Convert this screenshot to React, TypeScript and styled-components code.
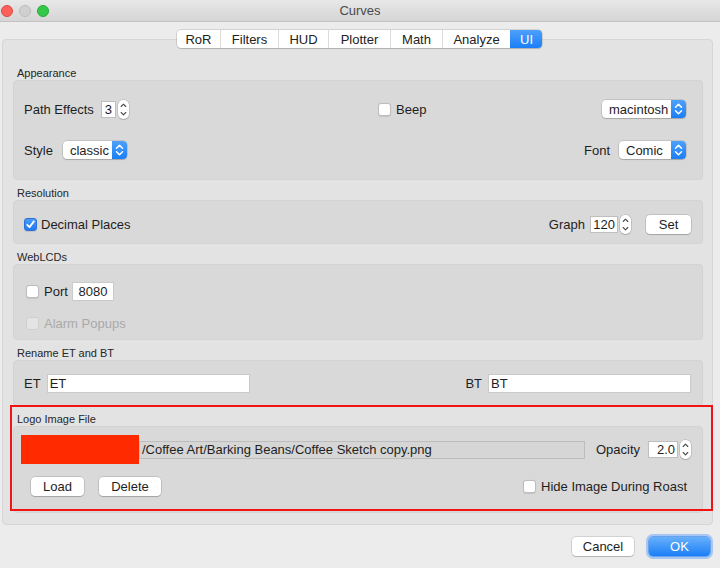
import * as React from "react";
import styled, { createGlobalStyle, css } from "styled-components";

const GlobalStyle = createGlobalStyle`
  html, body {
    margin: 0;
    padding: 0;
    background: #ececec;
  }
  body {
    font-family: "Liberation Sans", Arial, sans-serif;
    font-size: 13px;
    color: #1e1e1e;
  }
`;

const Window = styled.div`
  position: relative;
  width: 720px;
  height: 568px;
  overflow: hidden;
  background: #ececec;
  display: flex;
  flex-direction: column;
`;

const TitleBar = styled.div`
  flex: none;
  height: 22px;
  box-sizing: border-box;
  display: grid;
  grid-template-columns: 1fr auto 1fr;
  align-items: center;
  background: linear-gradient(#e8e8e8, #d5d5d5);
  border-bottom: 1px solid #c2c2c2;
  color: #4a4a4a;
  font-size: 13px;
`;

const Lights = styled.div`
  display: flex;
  gap: 6px;
  padding-left: 1px;
`;

const Light = styled.span<{ $c: string; $b: string }>`
  width: 12px;
  height: 12px;
  border-radius: 50%;
  box-sizing: border-box;
  background: ${(p) => p.$c};
  border: 0.5px solid ${(p) => p.$b};
`;

const Content = styled.div`
  display: flex;
  flex-direction: column;
  padding: 8px 7px 0 2px;
`;

const TabBar = styled.div`
  align-self: center;
  margin-left: 4px;
  position: relative;
  z-index: 1;
  display: flex;
  height: 18px;
  background: #fff;
  border-radius: 4px;
  box-shadow: 0 0 0 0.5px rgba(0, 0, 0, 0.22), 0 1px 1px rgba(0, 0, 0, 0.12);
  overflow: hidden;
`;

const Tab = styled.div<{ $w: number; $active?: boolean }>`
  width: ${(p) => p.$w}px;
  display: flex;
  align-items: center;
  justify-content: center;
  font-size: 13px;
  color: #222;
  border-left: 1px solid #dcdcdc;
  &:first-child {
    border-left: none;
  }
  ${(p) =>
    p.$active &&
    css`
      background: linear-gradient(#4da0fb, #1a7ff7);
      color: #fff;
      border-left-color: transparent;
    `}
`;

const Pane = styled.div`
  flex: none;
  margin-top: -9px;
  height: 486px;
  box-sizing: border-box;
  background: #e3e3e3;
  border: 1px solid #d6d6d6;
  border-radius: 4px;
  padding: 26px 9px 0 10px;
  display: flex;
  flex-direction: column;
  gap: 6px;
`;

const Section = styled.div`
  display: flex;
  flex-direction: column;
`;

const SectionLabel = styled.div`
  font-size: 11px;
  line-height: 14px;
  height: 14px;
  padding-left: 4px;
  color: #262626;
`;

const Group = styled.div<{ $h: number }>`
  height: ${(p) => p.$h}px;
  box-sizing: border-box;
  background: #d9d9d9;
  border: 1px solid #d3d3d3;
  border-radius: 4px;
`;

const AppearanceGrid = styled.div`
  display: grid;
  grid-template-columns: 342px 1fr auto;
  grid-template-rows: 20px 20px;
  row-gap: 21px;
  column-gap: 12px;
  padding: 18px 16px 0 10px;
  align-items: center;
`;

const Cell = styled.div<{ $end?: boolean; $gap?: number }>`
  display: flex;
  align-items: center;
  gap: ${(p) => p.$gap ?? 7}px;
  justify-self: ${(p) => (p.$end ? "end" : "start")};
`;

const Row = styled.div<{ $pad: string; $h?: number }>`
  display: flex;
  align-items: center;
  height: ${(p) => p.$h ?? 20}px;
  padding: ${(p) => p.$pad};
`;

const Spacer = styled.div`
  flex: 1;
`;

const Gap = styled.div<{ $w: number }>`
  flex: none;
  width: ${(p) => p.$w}px;
`;

const Text = styled.span<{ $disabled?: boolean }>`
  font-size: 13px;
  color: ${(p) => (p.$disabled ? "#a9a9a9" : "#1e1e1e")};
  white-space: nowrap;
`;

const CheckLabel = styled.label<{ $gap?: number }>`
  display: flex;
  align-items: center;
  gap: ${(p) => p.$gap ?? 5}px;
`;

const Box = styled.span<{ $checked?: boolean; $disabled?: boolean }>`
  width: 13px;
  height: 13px;
  box-sizing: border-box;
  border-radius: 3px;
  background: #fff;
  border: 1px solid #bdbdbd;
  box-shadow: 0 0.5px 1px rgba(0, 0, 0, 0.1);
  display: flex;
  align-items: center;
  justify-content: center;
  ${(p) =>
    p.$checked &&
    css`
      background: linear-gradient(#4a9bfa, #2478f3);
      border-color: #2a72d8;
    `}
  ${(p) =>
    p.$disabled &&
    css`
      background: #e4e4e4;
      border-color: #cfcfcf;
      box-shadow: none;
    `}
`;

const Popup = styled.div<{ $w: number }>`
  width: ${(p) => p.$w}px;
  height: 18px;
  display: flex;
  background: #fff;
  border-radius: 4px;
  box-shadow: 0 0 0 0.5px rgba(0, 0, 0, 0.2), 0 1px 1px rgba(0, 0, 0, 0.15);
  overflow: hidden;
`;

const PopupText = styled.span`
  flex: 1;
  display: flex;
  align-items: center;
  padding-left: 7px;
  font-size: 13px;
  color: #1e1e1e;
  white-space: nowrap;
`;

const PopupArrow = styled.span`
  width: 15px;
  flex: none;
  background: linear-gradient(#4ea1fb, #1b7ef5);
  display: flex;
  align-items: center;
  justify-content: center;
`;

const SpinField = styled.div<{ $w: number; $h?: number; $center?: boolean }>`
  width: ${(p) => p.$w}px;
  height: ${(p) => p.$h ?? 17}px;
  box-sizing: border-box;
  background: #fff;
  border: 1px solid #bfbfbf;
  display: flex;
  align-items: center;
  justify-content: ${(p) => (p.$center ? "center" : "flex-end")};
  padding-right: ${(p) => (p.$center ? 0 : 2)}px;
  font-size: 13px;
`;

const Stepper = styled.span`
  width: 11px;
  height: 19px;
  background: #fff;
  border-radius: 5px;
  box-shadow: 0 0 0 0.5px rgba(0, 0, 0, 0.2), 0 1px 1px rgba(0, 0, 0, 0.12);
  display: flex;
`;

const Spin = styled.div`
  display: flex;
  align-items: center;
  gap: 2px;
`;

const TextField = styled.div<{ $w?: number; $grow?: boolean; $readonly?: boolean }>`
  ${(p) => (p.$grow ? "flex: 1;" : `width: ${p.$w}px;`)}
  height: ${(p) => (p.$readonly ? 18 : 19)}px;
  box-sizing: border-box;
  background: ${(p) => (p.$readonly ? "#d6d6d6" : "#fff")};
  border: 1px solid ${(p) => (p.$readonly ? "#bdbdbd" : "#cacaca")};
  display: flex;
  align-items: center;
  padding-left: 2px;
  font-size: 13px;
  white-space: nowrap;
  overflow: hidden;
`;

const Button = styled.div<{ $w: number; $primary?: boolean }>`
  width: ${(p) => p.$w}px;
  height: 19px;
  border-radius: 4px;
  display: flex;
  align-items: center;
  justify-content: center;
  font-size: 13px;
  background: #fff;
  color: #1e1e1e;
  box-shadow: 0 0 0 0.5px rgba(0, 0, 0, 0.22), 0 1px 1px rgba(0, 0, 0, 0.15);
  ${(p) =>
    p.$primary &&
    css`
      background: linear-gradient(#68b0fb, #1a7ff7);
      color: #fff;
      box-shadow: 0 0 0 0.5px #2f7de0, 0 0 0 3px rgba(110, 170, 245, 0.55);
    `}
`;

const Redaction = styled.div`
  width: 118px;
  height: 29px;
  flex: none;
  background: #ff2a00;
`;

const Footer = styled.div`
  display: flex;
  justify-content: flex-end;
  align-items: center;
  gap: 15px;
  margin-top: 12px;
  padding-right: 3px;
`;

const Highlight = styled.div`
  position: absolute;
  left: 10px;
  top: 405px;
  width: 703px;
  height: 106px;
  box-sizing: border-box;
  border: 2px solid #f21414;
  pointer-events: none;
`;

const Chevrons = () => (
  <svg width="15" height="18" viewBox="0 0 15 18">
    <path d="M4.5 7.2 L7.5 4.2 L10.5 7.2 M4.5 10.8 L7.5 13.8 L10.5 10.8" fill="none" stroke="#fff" strokeWidth="1.5" strokeLinecap="round" strokeLinejoin="round" />
  </svg>
);

const StepArrows = () => (
  <svg width="11" height="19" viewBox="0 0 11 19">
    <path d="M3.2 6.5 L5.5 4.2 L7.8 6.5 M3.2 12.5 L5.5 14.8 L7.8 12.5" fill="none" stroke="#4a4a4a" strokeWidth="1.1" strokeLinecap="round" strokeLinejoin="round" />
  </svg>
);

const Tick = () => (
  <svg width="11" height="11" viewBox="0 0 11 11">
    <path d="M2.3 5.8 L4.5 8.2 L8.8 2.4" fill="none" stroke="#fff" strokeWidth="1.8" strokeLinecap="round" strokeLinejoin="round" />
  </svg>
);

const Check = ({ label, checked, disabled, gap }: { label: string; checked?: boolean; disabled?: boolean; gap?: number }) => (
  <CheckLabel $gap={gap}>
    <Box $checked={checked} $disabled={disabled}>{checked && <Tick />}</Box>
    <Text $disabled={disabled}>{label}</Text>
  </CheckLabel>
);

const Combo = ({ value, w }: { value: string; w: number }) => (
  <Popup $w={w}>
    <PopupText>{value}</PopupText>
    <PopupArrow>
      <Chevrons />
    </PopupArrow>
  </Popup>
);

const SpinBox = ({ value, w, h, center }: { value: string; w: number; h?: number; center?: boolean }) => (
  <Spin>
    <SpinField $w={w} $h={h} $center={center}>{value}</SpinField>
    <Stepper>
      <StepArrows />
    </Stepper>
  </Spin>
);

const tabs = [
  { name: "RoR", w: 43 },
  { name: "Filters", w: 57 },
  { name: "HUD", w: 49 },
  { name: "Plotter", w: 61 },
  { name: "Math", w: 51 },
  { name: "Analyze", w: 67 },
  { name: "UI", w: 31 },
];

export default function App() {
  return (
    <Window>
      <GlobalStyle />
      <TitleBar>
        <Lights>
          <Light $c="#fc605b" $b="#de4a45" />
          <Light $c="#d0d0d0" $b="#bcbcbc" />
          <Light $c="#34c84a" $b="#25a93a" />
        </Lights>
        <span>Curves</span>
        <span />
      </TitleBar>

      <Content>
        <TabBar>
          {tabs.map((t) => (
            <Tab key={t.name} $w={t.w} $active={t.name === "UI"}>
              {t.name}
            </Tab>
          ))}
        </TabBar>

        <Pane>
          <Section>
            <SectionLabel>Appearance</SectionLabel>
            <Group $h={100}>
              <AppearanceGrid>
                <Cell>
                  <Text>Path Effects</Text>
                  <SpinBox value="3" w={15} h={17} center />
                </Cell>
                <Cell>
                  <Check label="Beep" />
                </Cell>
                <Cell $end>
                  <Combo value="macintosh" w={84} />
                </Cell>
                <Cell $gap={10}>
                  <Text>Style</Text>
                  <Combo value="classic" w={64} />
                </Cell>
                <span />
                <Cell $end $gap={9}>
                  <Text>Font</Text>
                  <Combo value="Comic" w={67} />
                </Cell>
              </AppearanceGrid>
            </Group>
          </Section>

          <Section>
            <SectionLabel>Resolution</SectionLabel>
            <Group $h={44}>
              <Row $pad="13px 11px 0 10px">
                <Check label="Decimal Places" checked gap={4} />
                <Spacer />
                <Text>Graph</Text>
                <Gap $w={5} />
                <SpinBox value="120" w={28} />
                <Gap $w={15} />
                <Button $w={45}>Set</Button>
              </Row>
            </Group>
          </Section>

          <Section>
            <SectionLabel>WebLCDs</SectionLabel>
            <Group $h={76}>
              <Row $pad="16px 0 0 12px">
                <Check label="Port" />
                <Gap $w={4} />
                <TextField $w={42}>&nbsp;8080</TextField>
              </Row>
              <Row $pad="12px 0 0 12px">
                <Check label="Alarm Popups" disabled />
              </Row>
            </Group>
          </Section>

          <Section>
            <SectionLabel>Rename ET and BT</SectionLabel>
            <Group $h={46}>
              <Row $pad="12px 11px 0 10px">
                <Text>ET</Text>
                <Gap $w={6} />
                <TextField $w={203}>ET</TextField>
                <Spacer />
                <Text>BT</Text>
                <Gap $w={6} />
                <TextField $w={203}>BT</TextField>
              </Row>
            </Group>
          </Section>

          <Section>
            <SectionLabel>Logo Image File</SectionLabel>
            <Group $h={87}>
              <Row $pad="8px 11px 0 7px" $h={29}>
                <Redaction />
                <TextField $grow $readonly>
                  /Coffee Art/Barking Beans/Coffee Sketch copy.png
                </TextField>
                <Gap $w={11} />
                <Text>Opacity</Text>
                <Gap $w={8} />
                <SpinBox value="2.0" w={30} />
              </Row>
              <Row $pad="12px 15px 0 17px">
                <Button $w={53}>Load</Button>
                <Gap $w={15} />
                <Button $w={62}>Delete</Button>
                <Spacer />
                <Check label="Hide Image During Roast" />
              </Row>
            </Group>
          </Section>
        </Pane>

        <Footer>
          <Button $w={62}>Cancel</Button>
          <Button $w={61} $primary>
            OK
          </Button>
        </Footer>
      </Content>

      <Highlight />
    </Window>
  );
}
